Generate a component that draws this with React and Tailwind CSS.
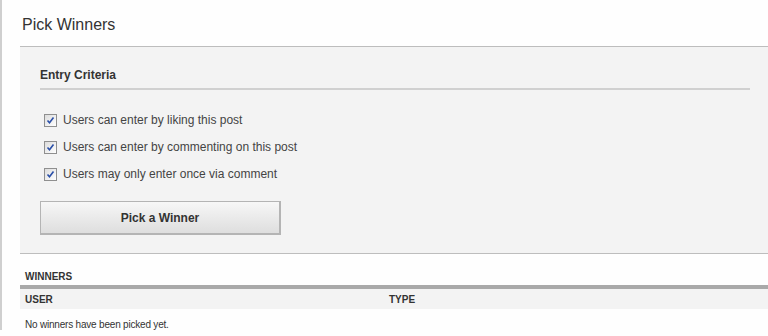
import React from "react";

function Check() {
  return (
    <span className="inline-flex h-[13px] w-[13px] shrink-0 items-center justify-center border border-[#8f8f8f] bg-gradient-to-br from-[#dcdcdc] to-[#ffffff]">
      <svg width="9" height="9" viewBox="0 0 9 9">
        <path d="M1.5 4.5 L3.5 6.8 L7.5 1.5" fill="none" stroke="#2a4fa8" strokeWidth="1.6" />
      </svg>
    </span>
  );
}

export default function App() {
  const items = [
    "Users can enter by liking this post",
    "Users can enter by commenting on this post",
    "Users may only enter once via comment",
  ];
  return (
    <div className="h-[336px] w-[768px] overflow-hidden bg-[#fefefe] text-[#333]" style={{ fontFamily: "'Liberation Sans', Arial, sans-serif" }}>
      <div className="h-[330px] border-l-2 border-[#cfcfcf] pl-[18px]">
        <div className="h-[46px] pt-[15px] pl-[2px] text-[16px] leading-[20px] text-[#333]">Pick Winners</div>
        <div className="border-t border-[#bdbdbd]" />
        <div className="h-[206px] bg-[#f3f3f3] pl-[20px] pr-[18px]">
          <div className="pt-[21px] text-[12px] font-bold leading-[15px] text-[#333]">Entry Criteria</div>
          <div className="mt-[5px] mr-0 h-[2px] w-[710px] bg-[#d0d0d0]" />
          <div className="mt-[24px] flex flex-col gap-[14px] pl-[4px]">
            {items.map((t) => (
              <div key={t} className="flex h-[13px] items-center gap-[6px] text-[12px] leading-[13px] text-[#444]">
                <Check />
                <span>{t}</span>
              </div>
            ))}
          </div>
          <button className="mt-[20px] h-[34px] w-[241px] border border-[#b4b4b4] border-r-2 border-b-2 bg-gradient-to-b from-[#f7f7f7] to-[#dedede] text-[12px] font-bold text-[#333]">
            Pick a Winner
          </button>
        </div>
        <div className="border-t border-[#bdbdbd]" />
        <div className="h-[31px] pt-[17px] pl-[5px] text-[10px] font-bold leading-[12px] text-[#333]">WINNERS</div>
        <div className="h-[4px] bg-[#a9a9a9]" />
        <div className="flex h-[20px] items-center bg-[#f3f3f3] pl-[5px] text-[10px] font-bold text-[#333]">
          <div className="w-[364px]">USER</div>
          <div>TYPE</div>
        </div>
        <div className="pt-[9px] pl-[5px] text-[10px] leading-[13px] tracking-[-0.2px] text-[#333]">No winners have been picked yet.</div>
      </div>
    </div>
  );
}
